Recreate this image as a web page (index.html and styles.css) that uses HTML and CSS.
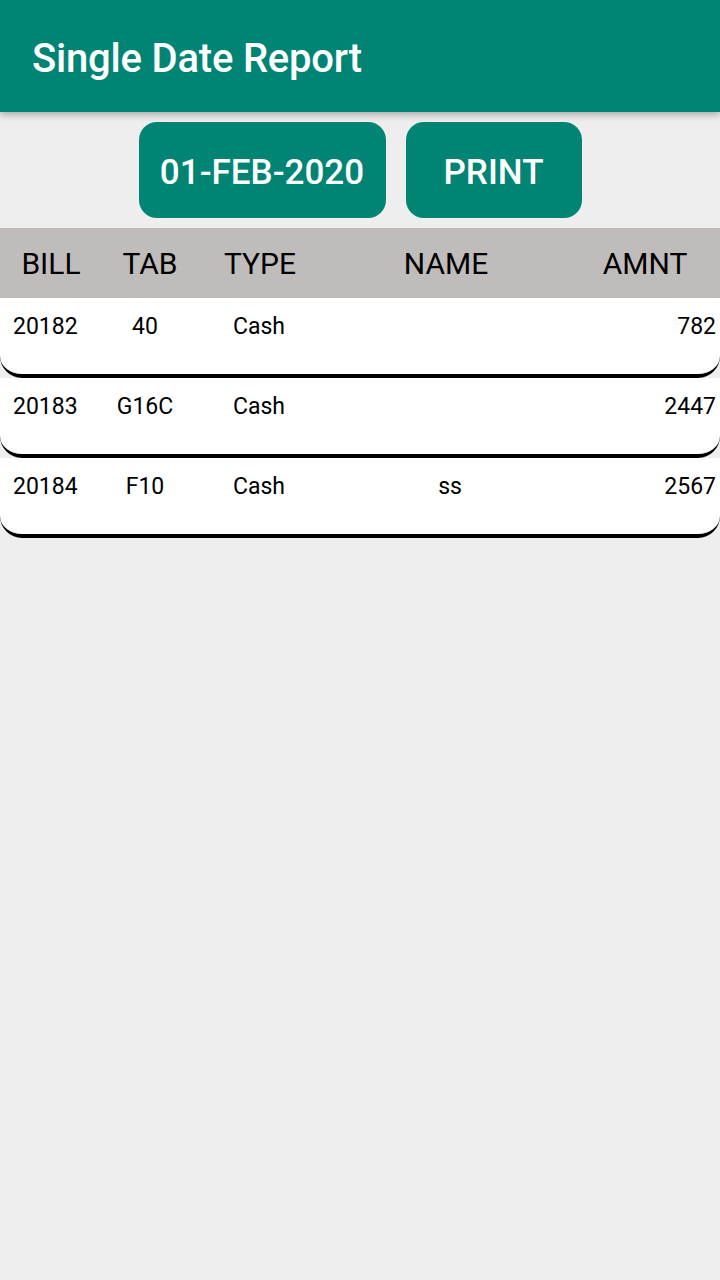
FILE: index.html
```html
<!DOCTYPE html>
<html>
<head>
<meta charset="utf-8">
<link rel="stylesheet" href="styles.css">
</head>
<body>
<header class="appbar"><h1 class="title">Single Date Report</h1></header>
<div class="actions">
  <button class="btn btn-date">01-FEB-2020</button>
  <button class="btn btn-print">PRINT</button>
</div>
<div class="thead">
  <span>BILL</span><span>TAB</span><span>TYPE</span><span>NAME</span><span>AMNT</span>
</div>
<div class="rows">
  <div class="row"><span class="c-bill">20182</span><span class="c-tab">40</span><span class="c-type">Cash</span><span class="c-name"></span><span class="c-amt">782</span></div>
  <div class="row"><span class="c-bill">20183</span><span class="c-tab">G16C</span><span class="c-type">Cash</span><span class="c-name"></span><span class="c-amt">2447</span></div>
  <div class="row"><span class="c-bill">20184</span><span class="c-tab">F10</span><span class="c-type">Cash</span><span class="c-name">ss</span><span class="c-amt">2567</span></div>
</div>
</body>
</html>
```
FILE: styles.css
```css
html, body {
  margin: 0;
  padding: 0;
}
body {
  width: 720px;
  height: 1280px;
  background: #eeeeee;
  font-family: Roboto, "Noto Sans", sans-serif;
  overflow: hidden;
}
.appbar {
  height: 112px;
  background: #028475;
  display: flex;
  align-items: center;
  padding-left: 32px;
  box-shadow: 0 3px 7px rgba(0,0,0,0.28);
  position: relative;
  z-index: 2;
}
.title {
  margin: 0;
  color: #fff;
  font-size: 40px;
  font-weight: 500;
  letter-spacing: -0.2px;
  padding-top: 4px;
}
.actions {
  display: flex;
  justify-content: center;
  gap: 20px;
  padding: 10px 0;
}
.btn {
  height: 96px;
  border: none;
  border-radius: 18px;
  background: #028475;
  color: #fff;
  font-family: Roboto, sans-serif;
  font-size: 35px;
  font-weight: 500;
  padding: 4px 0 0 0;
}
.btn-date { width: 247px; }
.btn-print { width: 176px; }
.thead {
  height: 70px;
  background: #c0bcbb;
  display: grid;
  grid-template-columns: 102px 96px 124px 248px 150px;
  align-items: center;
  font-size: 30px;
  color: #000;
  text-align: center;
}
.row {
  background: #fff;
  border-bottom: 4px solid #000;
  border-radius: 0 0 22px 22px;
  display: grid;
  grid-template-columns: 100px 90px 140px 240px 150px;
  align-items: start;
  font-size: 23px;
  color: #000;
  padding-top: 15px;
  box-sizing: border-box;
  height: 80px;
}
.c-bill { padding-left: 13px; }
.c-tab { text-align: center; }
.c-type { padding-left: 43px; }
.c-name { text-align: center; }
.c-amt { text-align: right; padding-right: 4px; }
```
